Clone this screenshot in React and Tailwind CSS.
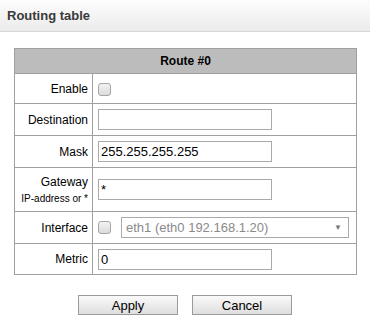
import React from "react";

const Box = () => (
  <span className="inline-block w-[13px] h-[13px] rounded-[3px] border border-[#a6a6a6] bg-gradient-to-b from-[#f2f2f2] to-[#dcdcdc] align-middle" />
);

const Field = ({ value = "" }) => (
  <div className="w-[174px] h-[21px] border border-[#a9a9a9] bg-white px-[2px] text-[13px] leading-[19px] text-black">
    {value}
  </div>
);

const rows = [
  { label: "Enable", h: "h-[30px]", cell: <Box /> },
  { label: "Destination", h: "h-[32px]", cell: <Field /> },
  { label: "Mask", h: "h-[32px]", cell: <Field value="255.255.255.255" /> },
  {
    label: (
      <div className="leading-none">
        <div className="text-[12px]">Gateway</div>
        <div className="text-[10px] mt-[6px]">IP-address or *</div>
      </div>
    ),
    h: "h-[44px]",
    cell: <Field value="*" />,
  },
  {
    label: "Interface",
    h: "h-[32px]",
    cell: (
      <div className="flex items-center gap-[10px]">
        <Box />
        <div className="w-[228px] h-[21px] border border-[#a9a9a9] bg-white flex items-center justify-between pl-[4px] pr-[6px] text-[13px] text-[#8a8a8a]">
          <span>eth1 (eth0 192.168.1.20)</span>
          <span className="text-[8px] text-[#777]">▼</span>
        </div>
      </div>
    ),
  },
  { label: "Metric", h: "h-[31px]", cell: <Field value="0" /> },
];

export default function App() {
  return (
    <div className="w-[370px] h-[323px] bg-white text-[#222]" style={{ fontFamily: '"Liberation Sans", Arial, sans-serif' }}>
      <div className="h-[32px] border-b border-[#d6d6d6] bg-gradient-to-b from-[#fdfdfd] to-[#ebebeb] flex items-center px-[7px]">
        <span className="text-[13px] font-bold text-[#3a3a3a]">Routing table</span>
      </div>
      <div className="pl-[14px] pt-[16px]">
        <table className="w-[343px] border-collapse border border-[#a0a0a0] text-[12px]">
          <thead>
            <tr className="h-[25px]">
              <th colSpan={2} className="bg-[#bcbcbc] border border-[#a0a0a0] font-bold text-black">
                Route #0
              </th>
            </tr>
          </thead>
          <tbody>
            {rows.map((r, i) => (
              <tr key={i} className={r.h}>
                <td className="w-[78px] border border-[#a0a0a0] text-right pr-[4px] align-middle text-black">{r.label}</td>
                <td className="border border-[#a0a0a0] pl-[5px] align-middle">{r.cell}</td>
              </tr>
            ))}
          </tbody>
        </table>
        <div className="flex gap-[14px] pl-[64px] pt-[20px]">
          <button className="w-[100px] h-[20px] border border-[#9a9a9a] bg-gradient-to-b from-[#fafafa] to-[#dedede] text-[13px] text-black leading-none">
            Apply
          </button>
          <button className="w-[100px] h-[20px] border border-[#9a9a9a] bg-gradient-to-b from-[#fafafa] to-[#dedede] text-[13px] text-black leading-none">
            Cancel
          </button>
        </div>
      </div>
    </div>
  );
}
